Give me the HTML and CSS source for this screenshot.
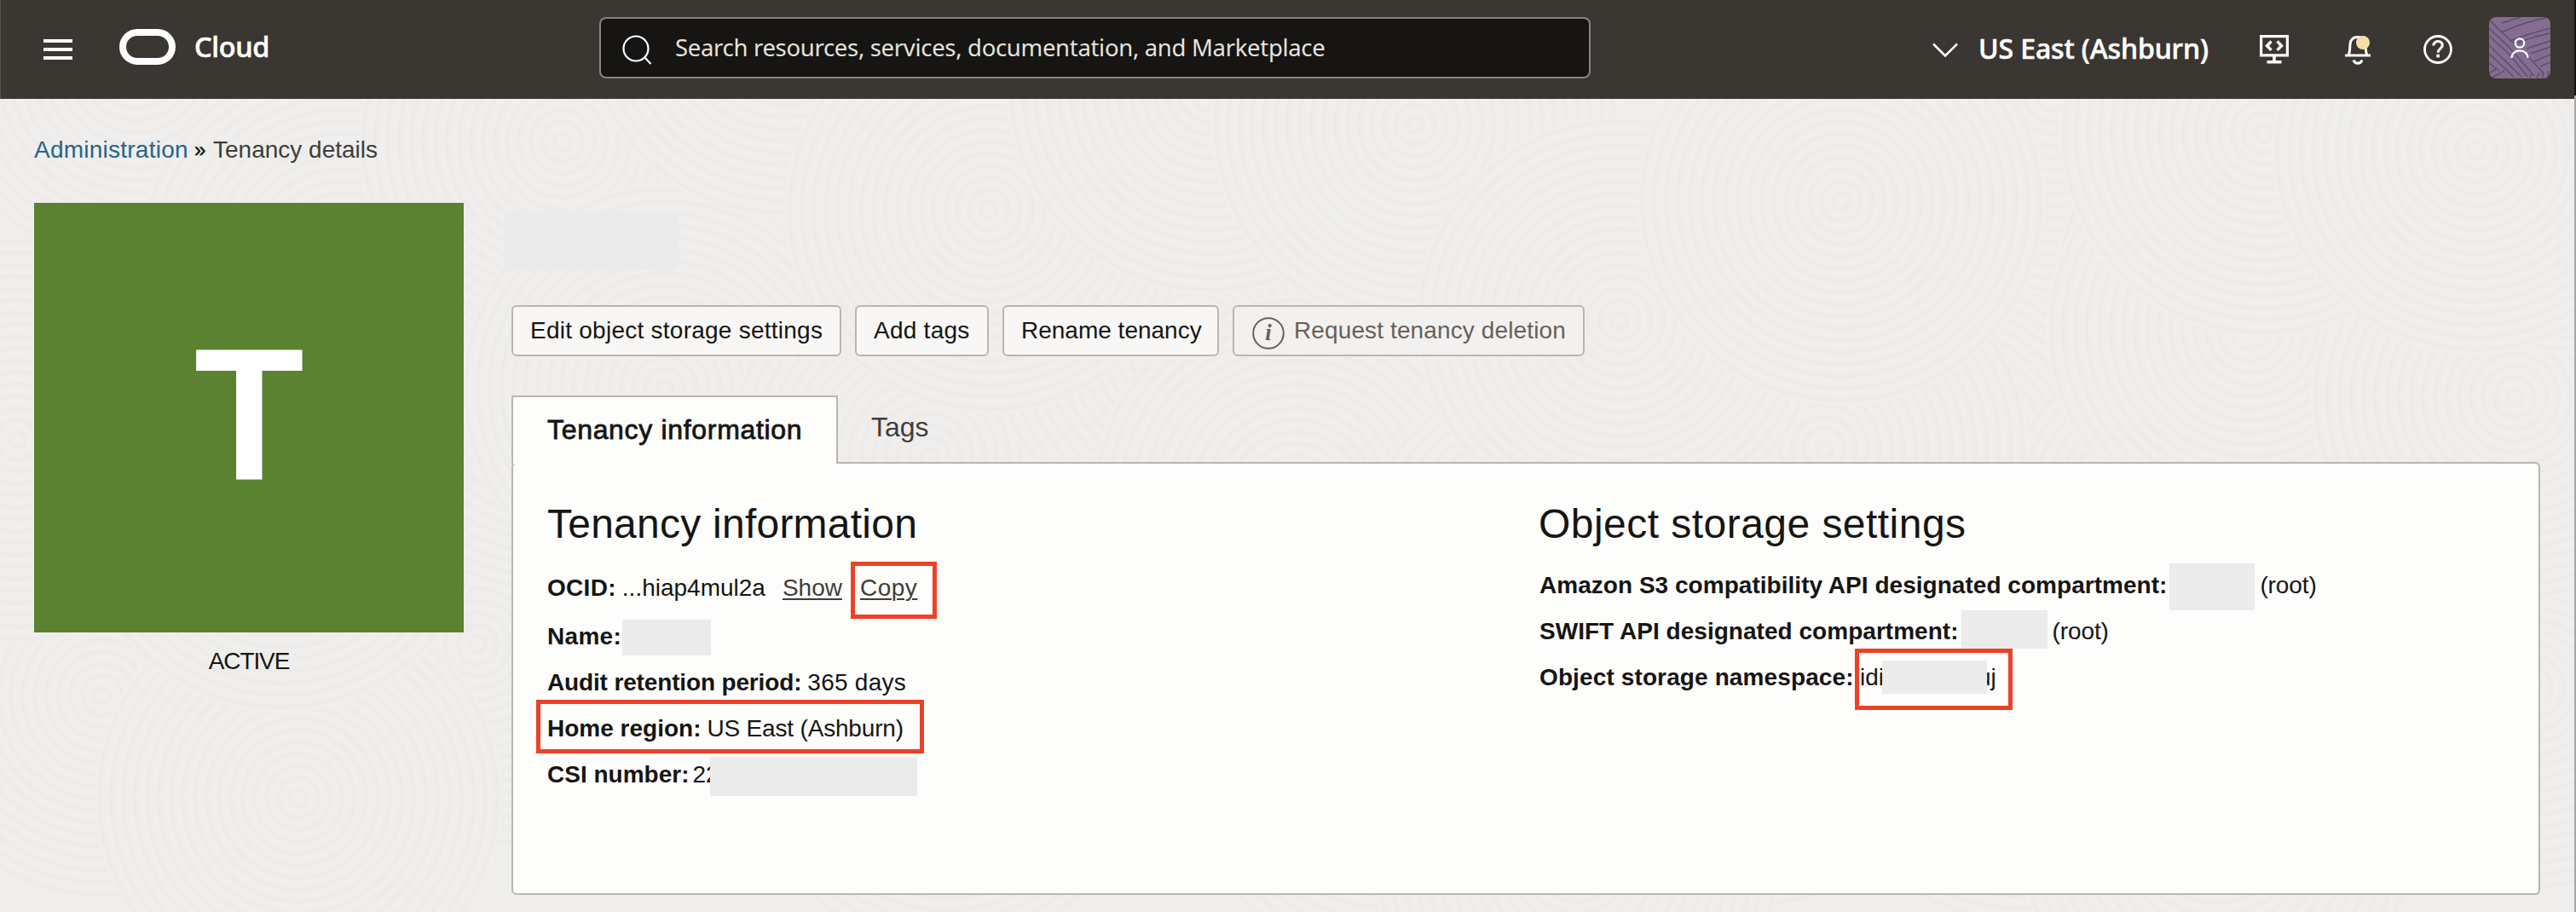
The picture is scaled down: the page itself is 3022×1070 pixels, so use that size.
FILE: index.html
```html
<!DOCTYPE html>
<html lang="en">
<head>
<meta charset="utf-8">
<title>Tenancy details</title>
<link rel="stylesheet" href="styles.css">
</head>
<body>
<svg class="texture" width="3020" height="954" viewBox="0 0 3020 954" aria-hidden="true">
  <defs>
    <radialGradient id="rings" gradientUnits="userSpaceOnUse" cx="0" cy="0" r="14" spreadMethod="repeat">
      <stop offset="0" stop-color="#f0efed"/><stop offset=".4" stop-color="#efeeec"/><stop offset=".7" stop-color="#ecebe9"/><stop offset="1" stop-color="#f0efed"/>
    </radialGradient>
    <circle id="ripple" r="240" fill="url(#rings)"/>
    <g id="cluster">
      <use href="#ripple" x="560" y="640"/><use href="#ripple" x="120" y="700"/><use href="#ripple" x="350" y="820"/>
      <use href="#ripple" x="20" y="400"/><use href="#ripple" x="330" y="480"/><use href="#ripple" x="640" y="340"/>
      <use href="#ripple" x="160" y="-40"/><use href="#ripple" x="400" y="190"/><use href="#ripple" x="660" y="50"/>
    </g>
  </defs>
  <rect width="3020" height="954" fill="#efeeec"/>
  <use href="#cluster"/><use href="#cluster" x="2250" y="30"/><use href="#cluster" x="760" y="-60"/><use href="#cluster" x="1500" y="70"/><use href="#cluster" x="2620" y="-130"/><use href="#ripple" x="2655" y="40"/><use href="#ripple" x="2905" y="60"/>
</svg>

<header class="topbar">
  <svg class="menu" width="34" height="24" viewBox="0 0 34 24"><path d="M0 2h34M0 12h34M0 22h34" stroke="#fff" stroke-width="4"/></svg>
  <svg class="logo" width="66" height="42" viewBox="0 0 66 42"><rect x="4" y="4" width="58" height="34" rx="17" fill="none" stroke="#fff" stroke-width="8"/></svg>
  <span class="brand">Cloud</span>
  <div class="search">
    <svg width="36" height="36" viewBox="0 0 36 36" fill="none" stroke="#fff" stroke-width="2.2"><circle cx="17" cy="16" r="14.5"/><path d="M27 26l7.5 8"/></svg>
    <span>Search resources, services, documentation, and Marketplace</span>
  </div>
  <div class="region">
    <svg width="30" height="18" viewBox="0 0 30 18" fill="none" stroke="#fff" stroke-width="2.6"><path d="M1 1.5l14 14 14-14"/></svg>
    <span>US East (Ashburn)</span>
  </div>
  <svg class="icon dev" width="34" height="34" viewBox="0 0 34 34" fill="none" stroke="#fff"><path d="M1.6 1.6h30.8v22.2H1.6z" stroke-width="3.2"/><path d="M17 24v7M8.500 31.800h17" stroke-width="3.600"/><path d="M13.500 7.500l-5 5.200 5 5.200M20.500 7.500l5 5.200-5 5.200" stroke-width="3.400"/></svg>
  <svg class="icon bell" width="34" height="38" viewBox="0 0 34 38" fill="none" stroke="#fff" stroke-width="3"><path d="M0 27h30M4 27c2-4 1.500-8 2-13C6.500 8 10 5.500 15 5.500S23.500 8 24 14c.5 5 0 9 2 13"/><path d="M10 32.500c1.500 5 8.500 5 10 0"/><circle cx="21" cy="12" r="8" fill="#f4dfa5" stroke="none"/></svg>
  <svg class="icon help" width="34" height="34" viewBox="0 0 34 34" fill="none" stroke="#fff"><circle cx="17" cy="17" r="15.500" stroke-width="2.800"/><path d="M11.800 12.500c.2-7 11.400-6.500 10.400.2-.5 3.300-5 3.600-5 8.100" stroke-width="3"/><path d="M15.300 22.800h3.600v3.600h-3.600z" fill="#fff" stroke="none"/></svg>
  <svg class="avatar" width="72" height="72" viewBox="0 0 72 72" fill="none">
    <rect width="72" height="72" fill="#846d90"/>
    <g stroke="#5e4f6a" stroke-width="1.500">
      <path d="M0 3l15 15 25 22 24 26M0 13l25 24 28 32M0 22l25 23 20 25M0 33l38 37M0 43l29 27M0 54l12 9M0 66l8-5M4 71l14-8"/>
      <path d="M15 7L37 0M14 18c20-8 37-15 58-18M24 28c16-6 32-11 48-15M34 30c14-6 25-8 38-11M44 37l28-9M49 43l23-8M53 52l19-8M60 58l12-5M48 71l2-4M56 71l3-5M63 71v-7M69 71l1-8"/>
    </g>
    <g stroke="#fff" stroke-width="2.200"><circle cx="36" cy="30.500" r="5.200"/><path d="M26.500 48c0-11.500 19-11.500 19 0"/></g>
  </svg>
</header>
<div class="edge"></div>

<nav class="crumbs"><a>Administration</a><b>»</b><span>Tenancy details</span></nav>

<main class="page">
  <aside class="status">
    <div class="tile"><span>T</span></div>
    <p>ACTIVE</p>
  </aside>
  <section class="content">
    <div class="mask title-mask"></div>
    <div class="actions">
      <button class="edit">Edit object storage settings</button>
      <button class="add">Add tags</button>
      <button class="rename">Rename tenancy</button>
      <button class="remove"><svg width="38" height="38" viewBox="0 0 38 38"><circle cx="19" cy="19" r="17.800" fill="none" stroke="#66605b" stroke-width="2"/><text x="19" y="27" text-anchor="middle">i</text></svg><span>Request tenancy deletion</span></button>
    </div>
    <div class="tabs">
      <div class="tab active">Tenancy information</div>
      <div class="tab">Tags</div>
    </div>
    <div class="panel">
      <div class="col info">
        <h2>Tenancy information</h2>
        <div class="row first"><strong class="ocid">OCID:</strong><span>...hiap4mul2a</span><a class="show">Show</a><a class="copy">Copy<i class="mark copy-mark"></i></a></div>
        <div class="row"><strong class="name">Name:</strong><i class="mask name-mask"></i></div>
        <div class="row"><strong class="audit">Audit retention period:</strong><span class="days">365 days</span></div>
        <div class="row"><strong>Home region:</strong><span class="home">US East (Ashburn)</span><i class="mark home-mark"></i></div>
        <div class="row"><strong class="csi">CSI number:</strong><span>22</span><i class="mask csi-mask"></i></div>
      </div>
      <div class="col storage">
        <h2>Object storage settings</h2>
        <div class="row"><strong class="api">Amazon S3 compatibility API designated compartment:</strong><i class="mask s3-mask"></i><span class="root">(root)</span></div>
        <div class="row"><strong class="api">SWIFT API designated compartment:</strong><i class="mask swift-mask"></i><span class="root">(root)</span></div>
        <div class="row"><strong class="ns">Object storage namespace:</strong><span class="ns-start">idi</span><span class="ns-end">uj</span><i class="mask ns-mask"></i><i class="mark ns-mark"></i></div>
      </div>
    </div>
  </section>
</main>
</body>
</html>
```
FILE: styles.css
```css
* { box-sizing: border-box; }
body {
  margin: 0;
  width: 3022px;
  height: 1070px;
  overflow: hidden;
  position: relative;
  background: #efeeec;
  color: #161513;
  font: 28px/40px "Liberation Sans", Arial, sans-serif;
}
svg { display: block; flex: none; }
h2, p { margin: 0; font-weight: normal; }
i { font-style: normal; }

.texture { position: absolute; left: 0; top: 116px; z-index: -1; }
.edge {
  position: absolute;
  right: 0;
  top: 0;
  width: 2px;
  height: 1070px;
  background: linear-gradient(#161513 112px, #a6a8a8 112px);
}

/* Header */
.topbar {
  display: flex;
  align-items: center;
  height: 116px;
  padding: 0 30px 0 51px;
  background: #3a3631;
  box-shadow: inset 1px 0 #55514c;
  color: #fff;
  font-family: "Noto Sans", sans-serif;
  white-space: nowrap;
}
.logo { margin: 0 0 6px 55px; }
.brand { width: 113px; margin: 0 0 6px 22px; font-size: 32.5px; font-weight: 500; letter-spacing: -.35px; -webkit-text-stroke: .6px; }
.search {
  display: flex;
  align-items: center;
  width: 1163px;
  height: 72px;
  margin: 0 0 4px 362px;
  padding-left: 24px;
  border: 2px solid #8b8580;
  border-radius: 8px;
  background: #161513;
  color: #e6e3df;
  font-size: 27.5px;
  letter-spacing: -.32px;
}
.search svg { margin: 5px 27px 0 0; }
.region { display: flex; align-items: center; margin: 0 0 2px 401px; font-size: 32px; font-weight: 500; letter-spacing: -.12px; -webkit-text-stroke: .6px; }
.region svg { margin-right: 24px; margin-top: 4px; }
.region span { width: 269px; }
.dev { margin-left: 61px; }
.bell { margin: 0 0 2px 66px; }
.help { margin-left: 58px; }
.avatar { margin: 0 0 4px 43px; border-radius: 8px; }

/* Breadcrumb */
.crumbs { display: flex; padding: 40px 40px 42px; color: #3f3c39; }
.crumbs a { width: 188px; color: #256489; letter-spacing: .24px; }
.crumbs b { width: 22px; font-size: 24px; font-weight: normal; color: #161513; -webkit-text-stroke: .5px; }

/* Page */
.page { display: flex; padding: 0 42px 0 40px; }
.status { width: 504px; margin-right: 56px; text-align: center; }
.status p { margin-top: 14px; letter-spacing: -1.09px; }
.tile { display: flex; align-items: center; justify-content: center; height: 504px; padding-bottom: 6px; background: #5a8231; }
.tile span { font: bold 220px/220px "Liberation Sans", Arial, sans-serif; color: #fff; transform: scaleX(.96); }
.content { width: 2380px; }
.mask { display: block; flex: none; background: #ebebeb; }
.title-mask { width: 204px; height: 70px; margin: 9px 0 41px -8px; }

.actions { display: flex; }
button {
  display: flex;
  align-items: center;
  height: 60px;
  margin: 0 16px 0 0;
  padding: 0 0 0 20px;
  border: 2px solid #bbb5b0;
  border-radius: 6px;
  background: #f8f7f5;
  color: #161513;
  font: 28px/56px "Liberation Sans", Arial, sans-serif;
  white-space: nowrap;
}
.edit { width: 387px; letter-spacing: .25px; }
.add { width: 157px; letter-spacing: .25px; }
.rename { width: 254px; }
.remove { width: 413px; padding-left: 21px; background: #f3f1ef; color: #66605b; letter-spacing: .12px; }
.remove svg { margin: 6px 11px 0 0; }
.remove text { font: italic bold 27px "Liberation Serif", serif; fill: #66605b; }

.tabs { display: flex; margin-top: 46px; font-size: 32px; }
.tab { height: 80px; margin-bottom: -2px; padding: 17px 39px; color: #3f3c39; }
.tab.active {
  position: relative;
  z-index: 1;
  width: 383px;
  padding: 18px 0 0 40px;
  border: 2px solid #bbb5b0;
  border-bottom: 0;
  background: #fdfdfb;
  color: #161513;
  letter-spacing: .68px;
  -webkit-text-stroke: .8px;
  white-space: nowrap;
}

.panel {
  display: flex;
  height: 508px;
  padding: 41px 0 0 40px;
  border: 2px solid #bbb5b0;
  border-radius: 6px;
  background: #fdfdfb;
}
.info { width: 1164px; }
h2 { font-size: 48px; line-height: 60px; margin-bottom: 15px; letter-spacing: .24px; }
.info h2 { margin-bottom: 18px; }
.storage h2 { margin-left: -1px; letter-spacing: .46px; }
.row { position: relative; display: flex; align-items: center; height: 54px; white-space: nowrap; }
.row.first { height: 57px; padding-bottom: 3px; }
.row strong { margin-right: 7px; }
.row a { color: #3f3c39; text-decoration: underline; text-decoration-thickness: 2px; text-underline-offset: 3px; }
.ocid { letter-spacing: .3px; }
.show { margin-left: 20px; }
.copy { position: relative; margin-left: 21px; letter-spacing: .5px; }
.row .name { width: 88px; margin: 0; letter-spacing: .3px; }
.name-mask { width: 104px; height: 42px; margin-top: 2px; }
.audit { letter-spacing: -.15px; }
.days { letter-spacing: .25px; }
.home { letter-spacing: -.18px; }
.row .csi { margin-right: 4px; }
.row .api { margin-right: 3px; letter-spacing: .03px; }
.root { margin-left: 6px; letter-spacing: -.11px; }
.s3-mask { width: 100px; height: 55px; margin-top: 3px; }
.swift-mask { width: 101px; height: 45px; margin-bottom: 5px; }
.row .ns { width: 376px; margin: 0; letter-spacing: .12px; }
.ns-end { margin-left: 110px; }

/* Annotations over the rows */
.csi-mask { position: absolute; left: 191px; top: 6px; width: 243px; height: 46px; }
.ns-mask { position: absolute; left: 402px; top: 7px; width: 123px; height: 39px; }
.mark { position: absolute; border: 5px solid #ec4126; }
.copy-mark { left: -11px; top: -11px; width: 101px; height: 67px; }
.home-mark { left: -13px; top: -7px; width: 455px; height: 63px; }
.ns-mark { left: 370px; top: -7px; width: 185px; height: 72px; }
```
